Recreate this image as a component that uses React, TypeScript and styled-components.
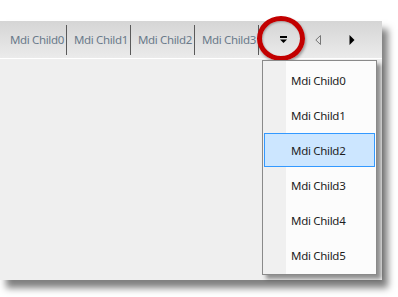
import React from "react";
import styled, { createGlobalStyle } from "styled-components";

const Global = createGlobalStyle`
  html, body { margin: 0; padding: 0; background: #ffffff; }
  body { font-family: "Noto Sans", "Open Sans", sans-serif; }
`;

const Stage = styled.div`
  width: 398px;
  height: 297px;
  padding-top: 21px;
  box-sizing: border-box;
  overflow: hidden;
`;

const Window = styled.div`
  position: relative;
  width: 382px;
  height: 259px;
  background: #efefef;
  box-shadow: 6px 8px 7px rgba(0, 0, 0, 0.5);
  display: flex;
  flex-direction: column;
`;

const TabBar = styled.div`
  height: 37px;
  background: linear-gradient(#d5d5d5, #ebebeb);
  border-bottom: 1px solid #ffffff;
  display: flex;
  align-items: center;
  padding-left: 3px;
`;

const Tab = styled.div`
  width: 64px;
  height: 30px;
  display: flex;
  align-items: center;
  padding-left: 7px;
  box-sizing: border-box;
  border-right: 1px solid #5a5a5a;
  font-size: 11.5px;
  color: #6a7a8a;
  white-space: nowrap;
  letter-spacing: -0.35px;
`;

const NavButton = styled.div<{ $first?: boolean }>`
  width: 34px;
  height: 30px;
  margin-left: ${(p) => (p.$first ? "8px" : "0")};
  display: flex;
  align-items: center;
  justify-content: center;
`;

const Content = styled.div`
  flex: 1;
`;

const Highlight = styled.div`
  position: absolute;
  left: 257px;
  top: -5px;
  width: 38px;
  height: 35px;
  border: 5px solid #c20000;
  border-radius: 50%;
  box-shadow: 1px 2px 3px rgba(0, 0, 0, 0.35), inset 1px 1px 2px rgba(0, 0, 0, 0.25);
  pointer-events: none;
`;

const Popup = styled.div`
  position: absolute;
  left: 262px;
  top: 39px;
  width: 115px;
  height: 215px;
  box-sizing: border-box;
  border: 1px solid #8a8a8a;
  background: linear-gradient(to right, #f0f0f0 0, #f0f0f0 23px, #fcfcfc 23px);
  box-shadow: 4px 4px 4px rgba(0, 0, 0, 0.4);
  padding: 2px 1px;
  display: flex;
  flex-direction: column;
`;

const Item = styled.div<{ $selected?: boolean }>`
  height: 35px;
  flex: none;
  box-sizing: border-box;
  display: flex;
  align-items: center;
  padding-left: 26px;
  font-size: 11.5px;
  letter-spacing: -0.3px;
  color: #1e1e1e;
  border: 1px solid ${(p) => (p.$selected ? "#3399ff" : "transparent")};
  background: ${(p) => (p.$selected ? "#cce6ff" : "transparent")};
  ${(p) => (p.$selected ? "height: 34px; margin-bottom: 1px;" : "")}
`;

const tabs = ["Mdi Child0", "Mdi Child1", "Mdi Child2", "Mdi Child3"];
const items = ["Mdi Child0", "Mdi Child1", "Mdi Child2", "Mdi Child3", "Mdi Child4", "Mdi Child5"];

export default function App() {
  return (
    <>
      <Global />
      <Stage>
        <Window>
          <TabBar>
            {tabs.map((t) => (
              <Tab key={t}>{t}</Tab>
            ))}
            <NavButton $first>
              <svg width="8" height="8" viewBox="0 0 8 8">
                <rect x="0" y="0" width="7" height="2" fill="#000" />
                <polygon points="0,3.5 7,3.5 3.5,7" fill="#000" />
              </svg>
            </NavButton>
            <NavButton>
              <svg width="6" height="10" viewBox="0 0 6 10">
                <polygon points="5.5,0.5 5.5,9.5 0.8,5" fill="none" stroke="#777" strokeWidth="1" />
              </svg>
            </NavButton>
            <NavButton>
              <svg width="6" height="10" viewBox="0 0 6 10">
                <polygon points="0.5,0 5.5,5 0.5,10" fill="#000" />
              </svg>
            </NavButton>
          </TabBar>
          <Content />
          <Highlight />
          <Popup>
            {items.map((it, i) => (
              <Item key={it} $selected={i === 2}>
                {it}
              </Item>
            ))}
          </Popup>
        </Window>
      </Stage>
    </>
  );
}
